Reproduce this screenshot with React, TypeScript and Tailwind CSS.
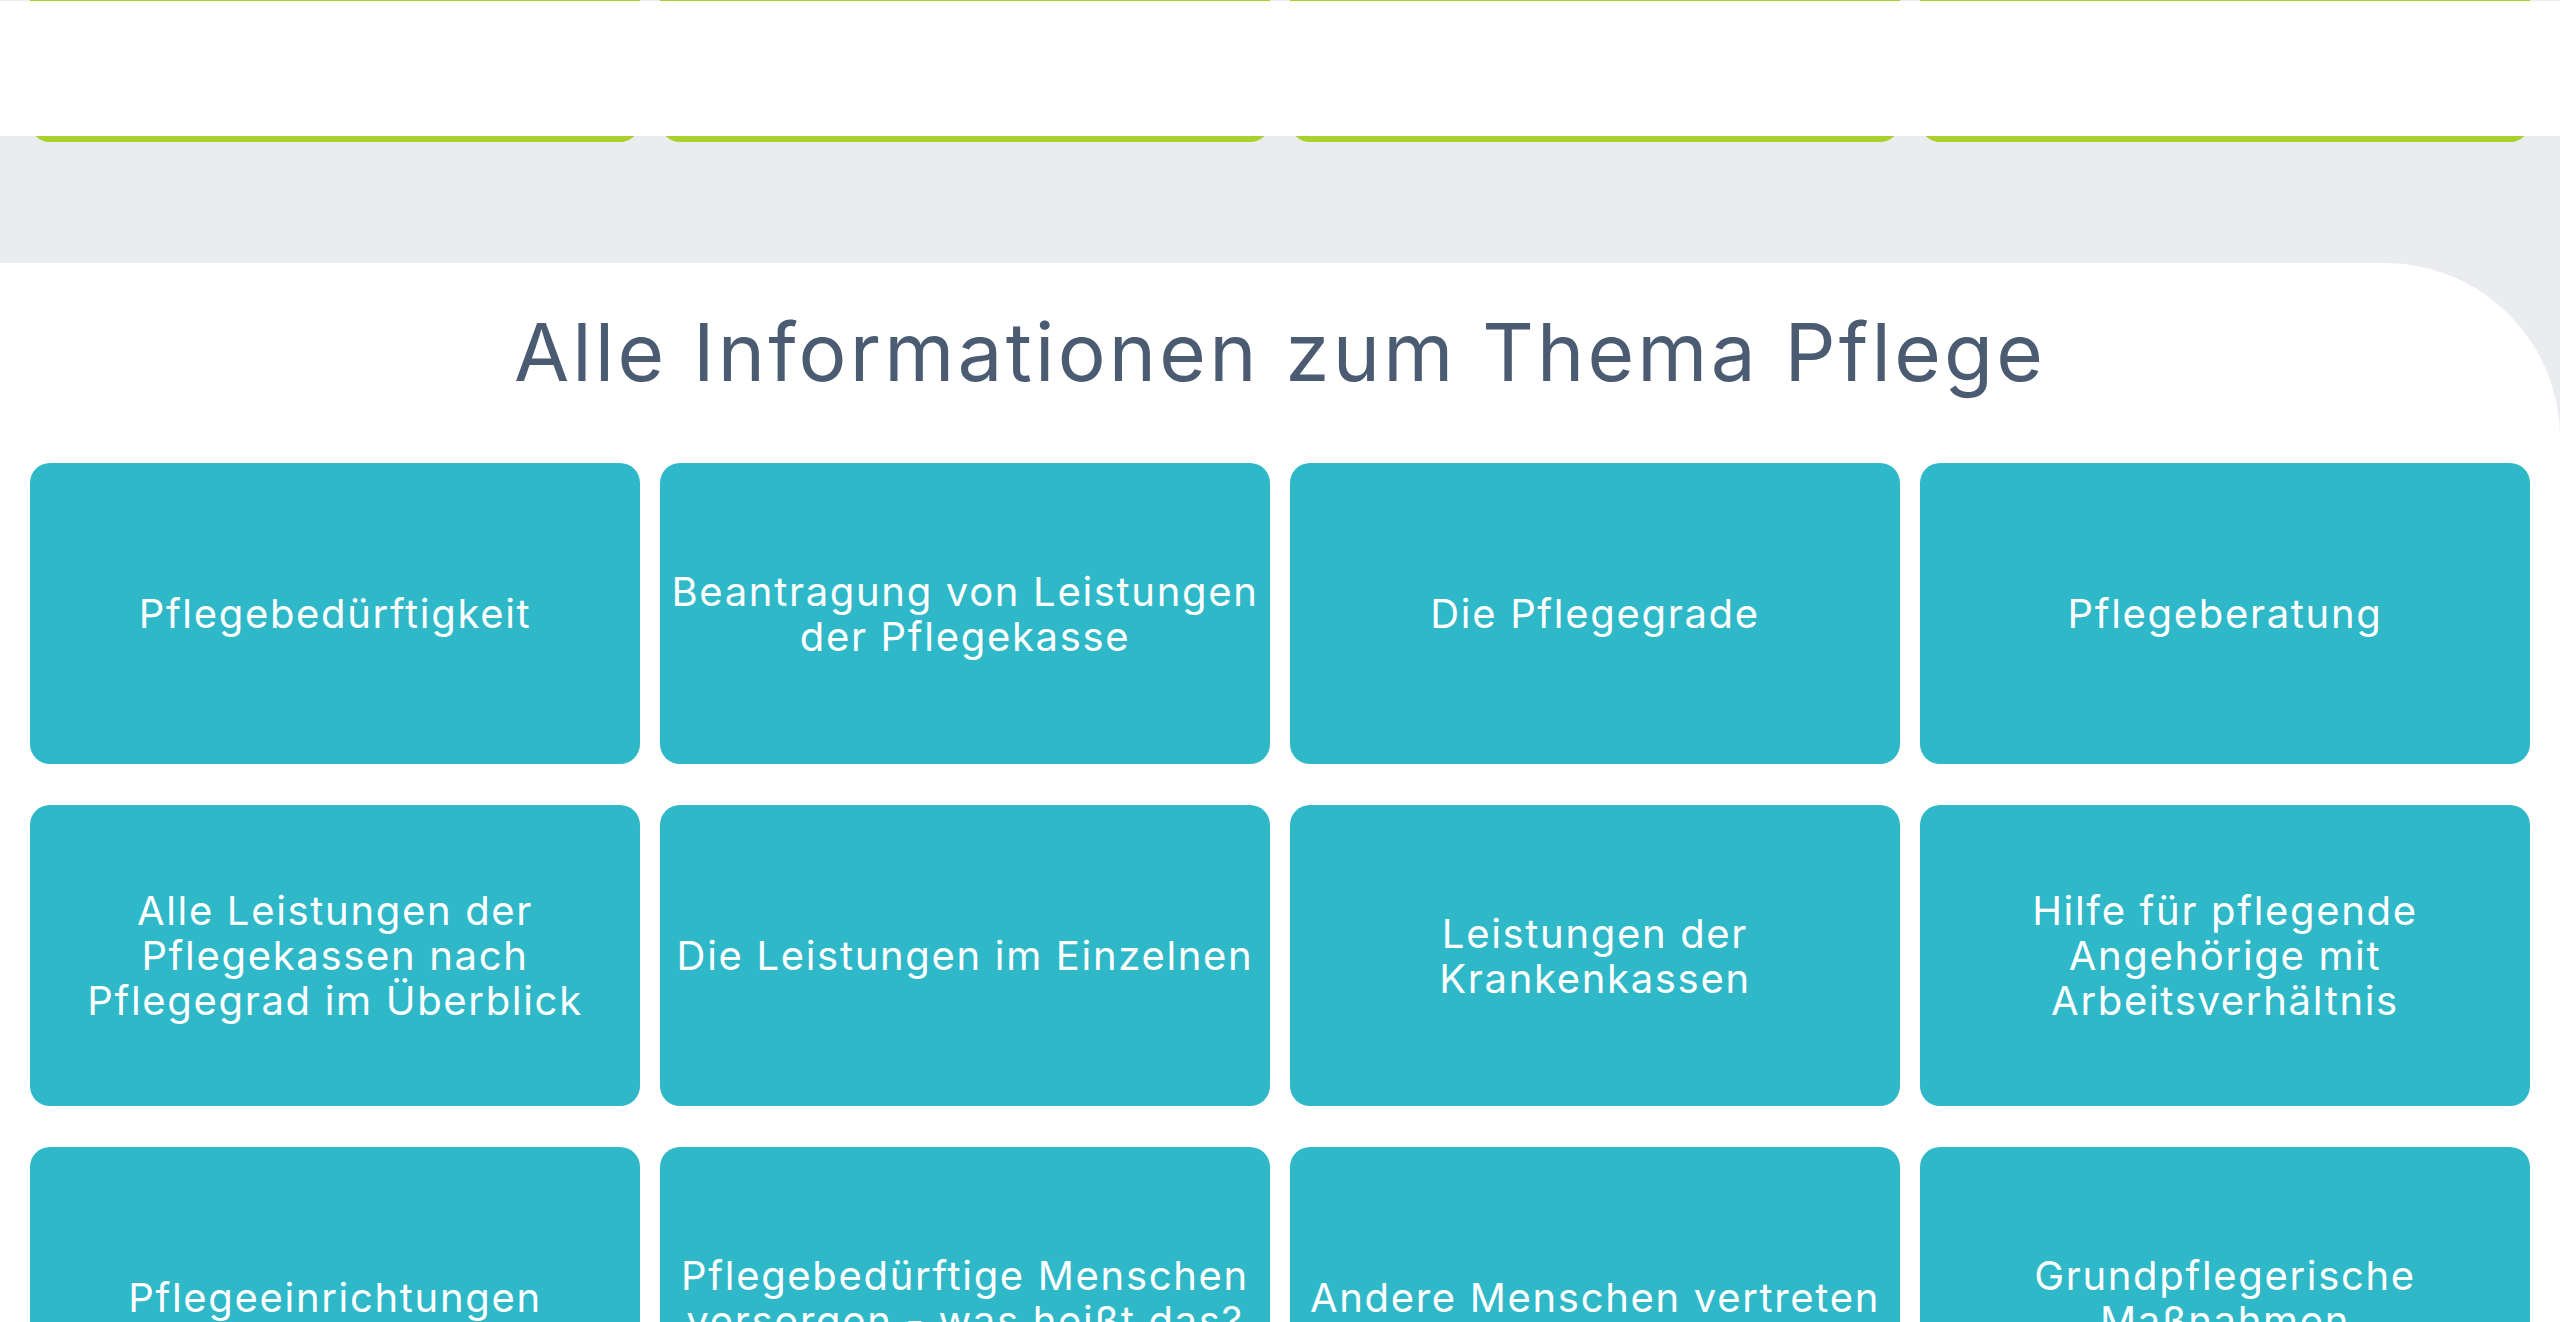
const topics: string[][] = [
  ["Pflegebedürftigkeit"],
  ["Beantragung von Leistungen", "der Pflegekasse"],
  ["Die Pflegegrade"],
  ["Pflegeberatung"],
  ["Alle Leistungen der", "Pflegekassen nach", "Pflegegrad im Überblick"],
  ["Die Leistungen im Einzelnen"],
  ["Leistungen der", "Krankenkassen"],
  ["Hilfe für pflegende", "Angehörige mit", "Arbeitsverhältnis"],
  ["Pflegeeinrichtungen"],
  ["Pflegebedürftige Menschen", "versorgen - was heißt das?"],
  ["Andere Menschen vertreten"],
  ["Grundpflegerische", "Maßnahmen"],
];

const TopicCard = ({ lines }: { lines: string[] }) => (
  <a
    href="#"
    className="flex h-[301px] items-center justify-center rounded-[20px] bg-[#2eb8c8] px-1 text-center text-[40px] leading-[45px] tracking-[0.042em] text-white"
  >
    <span>
      {lines.map((l, i) => (
        <span key={i} className="block whitespace-nowrap">
          {l}
        </span>
      ))}
    </span>
  </a>
);

export default function App() {
  return (
    <div
      className="min-h-screen w-full overflow-hidden bg-[#ebecf0]"
      style={{ fontFamily: "Inter, 'Open Sans', sans-serif" }}
    >
      {/* sticky header, empty at this scroll position */}
      <div className="fixed inset-x-0 top-px z-10 h-[135px] bg-white" />

      <div className="grid grid-cols-4 gap-x-5 px-[30px] pb-[121px]">
        {[0, 1, 2, 3].map((i) => (
          <div key={i} className="h-[142px] rounded-b-[20px] bg-[#a8d12b]" />
        ))}
      </div>

      <section className="rounded-tr-[175px] bg-white pt-[49px] pb-20">
        <h2 className="text-center text-[80px] leading-[80px] font-normal tracking-[0.04em] text-[#4b5b72]">
          Alle Informationen zum Thema Pflege
        </h2>
        <div className="mt-[71px] grid grid-cols-4 gap-x-5 gap-y-[41px] px-[30px]">
          {topics.map((t, i) => (
            <TopicCard key={i} lines={t} />
          ))}
        </div>
      </section>
    </div>
  );
}
